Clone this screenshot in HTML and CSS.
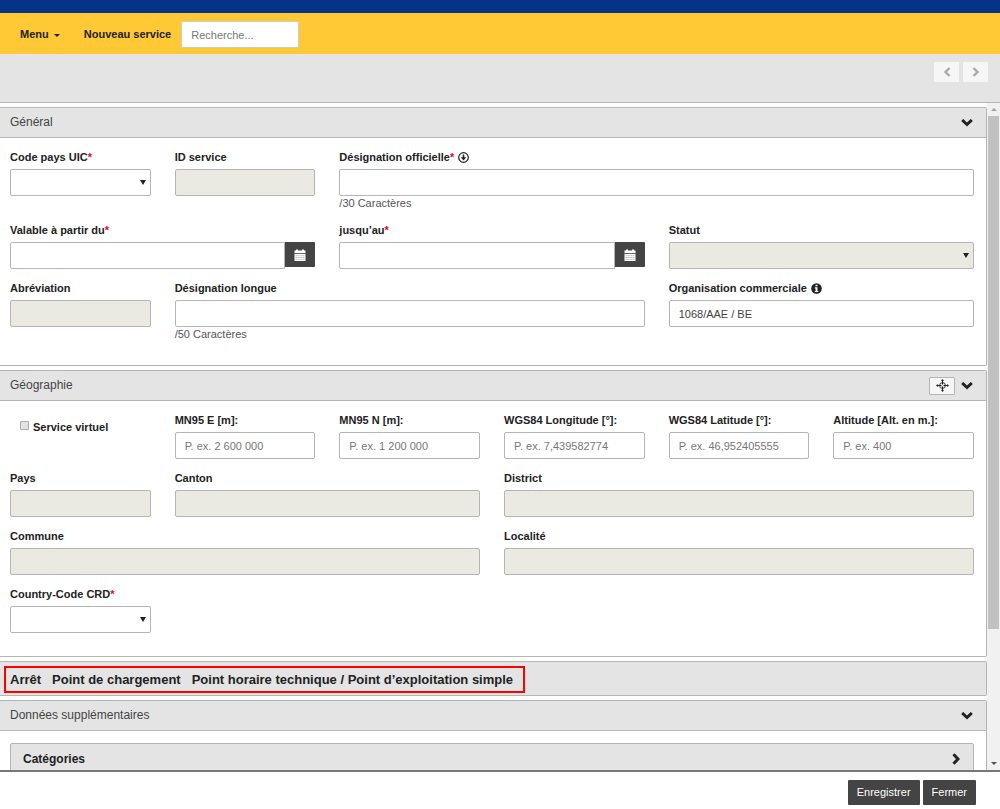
FILE: index.html
```
<!DOCTYPE html>
<html lang="fr">
<head>
    <meta charset="UTF-8">
    <title>Nouveau service</title>
    <meta name="viewport" content="width=device-width, initial-scale=1">
    <link rel="stylesheet" href="styles.css">
</head>
<body>
    <div class="brand-bar"></div>
    <nav class="navbar">
        <button type="button" class="nav-item">Menu <span class="caret"></span></button>
        <a href="#" class="nav-item">Nouveau service</a>
        <input type="search" class="search" placeholder="Recherche..." aria-label="Recherche">
    </nav>

    <div class="toolbar">
        <button type="button" class="btn-nav" aria-label="Précédent" disabled>
            <svg width="8" height="10" viewBox="0 0 8 10"><path d="M6.5 1 2.5 5l4 4"/></svg>
        </button>
        <button type="button" class="btn-nav" aria-label="Suivant" disabled>
            <svg width="8" height="10" viewBox="0 0 8 10"><path d="M1.5 1l4 4-4 4"/></svg>
        </button>
    </div>

    <div class="scroll-area">
        <main class="content">
            <section class="panel">
                <div class="panel-head">
                    <h2>Général</h2>
                    <button type="button" class="toggle" aria-label="Réduire Général">
                        <svg width="12" height="8" viewBox="0 0 12 8"><path d="M1.2 1 6 5.500 10.800 1"/></svg>
                    </button>
                </div>
                <div class="panel-body grid">
                    <div class="field">
                        <label for="uic">Code pays UIC<span class="req">*</span></label>
                        <div class="select"><select id="uic"><option></option></select></div>
                    </div>
                    <div class="field">
                        <label for="service-id">ID service</label>
                        <input type="text" id="service-id" disabled>
                    </div>
                    <div class="field span-4">
                        <label for="name">Désignation officielle<span class="req">*</span>
                            <svg class="label-icon" width="11" height="11" viewBox="0 0 11 11"><circle cx="5.500" cy="5.500" r="4.800" fill="none" stroke="#222" stroke-width="1.200"/><path d="M4.700 2.500h1.600v2.700h2L5.500 8.400 2.700 5.200h2z" fill="#222"/></svg>
                        </label>
                        <input type="text" id="name">
                        <span class="help">/30 Caractères</span>
                    </div>

                    <div class="field span-2">
                        <label for="from">Valable à partir du<span class="req">*</span></label>
                        <div class="date">
                            <input type="text" id="from">
                            <button type="button" aria-label="Choisir la date de début">
                                <svg width="12" height="12" viewBox="0 0 12 12"><path d="M0.500 1.500H2V.5h2v1h4v-1h2v1h1.500V4H.5z" fill="#fff"/><path d="M.5 4.800h11V12H.5z" fill="#fff"/><path d="M1.500 6.700h9M1.500 8.500h9M1.500 10.300h9" stroke="#888" stroke-width=".6" stroke-dasharray="1.300 .6"/></svg>
                            </button>
                        </div>
                    </div>
                    <div class="field span-2">
                        <label for="to">jusqu’au<span class="req">*</span></label>
                        <div class="date">
                            <input type="text" id="to">
                            <button type="button" aria-label="Choisir la date de fin">
                                <svg width="12" height="12" viewBox="0 0 12 12"><path d="M0.500 1.500H2V.5h2v1h4v-1h2v1h1.500V4H.5z" fill="#fff"/><path d="M.5 4.800h11V12H.5z" fill="#fff"/><path d="M1.500 6.700h9M1.500 8.500h9M1.500 10.300h9" stroke="#888" stroke-width=".6" stroke-dasharray="1.300 .6"/></svg>
                            </button>
                        </div>
                    </div>
                    <div class="field span-2">
                        <label for="status">Statut</label>
                        <div class="select"><select id="status" disabled><option></option></select></div>
                    </div>

                    <div class="field">
                        <label for="abbr">Abréviation</label>
                        <input type="text" id="abbr" disabled>
                    </div>
                    <div class="field span-3">
                        <label for="long-name">Désignation longue</label>
                        <input type="text" id="long-name">
                        <span class="help">/50 Caractères</span>
                    </div>
                    <div class="field span-2">
                        <label for="org">Organisation commerciale
                            <svg class="label-icon" width="11" height="11" viewBox="0 0 11 11"><circle cx="5.500" cy="5.500" r="5.300" fill="#222"/><path d="M4.500 1.700h2v1.600h-2zM3.800 4.300h2.700v3.600h.8v1.200H3.800V7.900h.8V5.500h-.8z" fill="#fff"/></svg>
                        </label>
                        <input type="text" id="org" value="1068/AAE / BE">
                    </div>
                </div>
            </section>

            <section class="panel">
                <div class="panel-head">
                    <h2>Géographie</h2>
                    <button type="button" class="btn-locate" aria-label="Localiser">
                        <svg width="13" height="13" viewBox="0 0 13 13"><circle cx="6.500" cy="6.500" r="2.900" fill="none" stroke="#222" stroke-width=".9"/><path d="M6.500 1v4.500M6.500 7.500V12M1 6.500h4.500M7.500 6.500H12" stroke="#222" stroke-width="1.100"/><path d="M6.500 0 8 2H5zM6.500 13 8 11H5zM0 6.500 2 5v3zM13 6.500 11 5v3z" fill="#222"/></svg>
                    </button>
                    <button type="button" class="toggle" aria-label="Réduire Géographie">
                        <svg width="12" height="8" viewBox="0 0 12 8"><path d="M1.2 1 6 5.500 10.800 1"/></svg>
                    </button>
                </div>
                <div class="panel-body grid">
                    <div class="check">
                        <input type="checkbox" id="virtual">
                        <label for="virtual">Service virtuel</label>
                    </div>
                    <div class="field">
                        <label for="mn95e">MN95 E [m]:</label>
                        <input type="text" id="mn95e" placeholder="P. ex. 2 600 000">
                    </div>
                    <div class="field">
                        <label for="mn95n">MN95 N [m]:</label>
                        <input type="text" id="mn95n" placeholder="P. ex. 1 200 000">
                    </div>
                    <div class="field">
                        <label for="lon">WGS84 Longitude [°]:</label>
                        <input type="text" id="lon" placeholder="P. ex. 7,439582774">
                    </div>
                    <div class="field">
                        <label for="lat">WGS84 Latitude [°]:</label>
                        <input type="text" id="lat" placeholder="P. ex. 46,952405555">
                    </div>
                    <div class="field">
                        <label for="alt">Altitude [Alt. en m.]:</label>
                        <input type="text" id="alt" placeholder="P. ex. 400">
                    </div>

                    <div class="field">
                        <label for="country">Pays</label>
                        <input type="text" id="country" disabled>
                    </div>
                    <div class="field span-2">
                        <label for="canton">Canton</label>
                        <input type="text" id="canton" disabled>
                    </div>
                    <div class="field span-3">
                        <label for="district">District</label>
                        <input type="text" id="district" disabled>
                    </div>

                    <div class="field span-3">
                        <label for="commune">Commune</label>
                        <input type="text" id="commune" disabled>
                    </div>
                    <div class="field span-3">
                        <label for="locality">Localité</label>
                        <input type="text" id="locality" disabled>
                    </div>

                    <div class="field">
                        <label for="crd">Country-Code CRD<span class="req">*</span></label>
                        <div class="select"><select id="crd"><option></option></select></div>
                    </div>
                </div>
            </section>

            <section class="panel types">
                <div class="type-list">
                    <span>Arrêt</span>
                    <span>Point de chargement</span>
                    <span>Point horaire technique / Point d’exploitation simple</span>
                </div>
            </section>

            <section class="panel">
                <div class="panel-head">
                    <h2>Données supplémentaires</h2>
                    <button type="button" class="toggle" aria-label="Réduire Données supplémentaires">
                        <svg width="12" height="8" viewBox="0 0 12 8"><path d="M1.2 1 6 5.500 10.800 1"/></svg>
                    </button>
                </div>
                <div class="panel-body">
                    <div class="sub-panel">
                        <h3>Catégories</h3>
                        <button type="button" class="toggle" aria-label="Ouvrir Catégories">
                            <svg width="8" height="12" viewBox="0 0 8 12"><path d="M1.500 1.200 6 6l-4.500 4.800"/></svg>
                        </button>
                    </div>
                </div>
            </section>
        </main>
        <div class="scrollbar" aria-hidden="true">
            <span class="arrow-up"></span>
            <div class="track"><div class="thumb"></div></div>
            <span class="arrow-down"></span>
        </div>
    </div>

    <footer class="footer">
        <button type="submit" class="btn">Enregistrer</button>
        <button type="button" class="btn">Fermer</button>
    </footer>
</body>
</html>
```
FILE: styles.css
```
* {
    box-sizing: border-box;
}

body {
    margin: 0;
    height: 100vh;
    display: flex;
    flex-direction: column;
    background: #fff;
    color: #222;
    font-family: "Liberation Sans", Arial, sans-serif;
    font-size: 11px;
    line-height: 15px;
}

button,
input,
select {
    font: inherit;
    color: inherit;
    margin: 0;
}

button {
    cursor: pointer;
}

svg {
    display: block;
}

/* header */

.brand-bar {
    flex: none;
    height: 13px;
    background: #053388;
}

.navbar {
    flex: none;
    display: flex;
    align-items: center;
    height: 41px;
    padding: 2px 0 0 20px;
    background: #ffc935;
}

.nav-item {
    margin-right: 24px;
    padding: 0;
    border: 0;
    background: none;
    color: #222;
    font-weight: bold;
    text-decoration: none;
}

.nav-item + .nav-item {
    margin-right: 10px;
}

.caret {
    display: inline-block;
    margin-left: 2px;
    vertical-align: middle;
    border: 3px solid transparent;
    border-top-color: #222;
    border-bottom: 0;
}

.search {
    width: 118px;
    height: 27px;
    padding: 0 9px;
    border: 1px solid #ccc;
    border-radius: 2px;
    background: #fff;
}

::placeholder {
    color: #777;
    opacity: 1;
}

.toolbar {
    flex: none;
    display: flex;
    justify-content: flex-end;
    align-items: flex-start;
    gap: 4px;
    height: 49px;
    padding: 8px 12px 0;
    border-bottom: 1px solid #b5b5b5;
    background: #e4e4e4;
}

.btn-nav {
    display: flex;
    align-items: center;
    justify-content: center;
    width: 25px;
    height: 20px;
    padding: 0;
    border: 0;
    border-radius: 1px;
    background: #f6f6f6;
}

.btn-nav path {
    fill: none;
    stroke: #aaa;
    stroke-width: 2.4;
}

/* scrolling content */

.scroll-area {
    flex: 1;
    min-height: 0;
    display: flex;
}

.content {
    flex: 1;
    min-width: 0;
    padding-top: 4px;
    overflow-y: auto;
    scrollbar-width: none;
}

.scrollbar {
    flex: none;
    display: flex;
    flex-direction: column;
    align-items: center;
    width: 13px;
    padding: 5px 1px;
    background: #f1f1f1;
}

.track {
    flex: 1;
    width: 100%;
    margin: 5px 0;
}

.thumb {
    height: 80%;
    background: #c1c1c1;
}

.arrow-up,
.arrow-down {
    border: 3px solid transparent;
}

.arrow-up {
    border-top: 0;
    border-bottom-color: #a3a3a3;
}

.arrow-down {
    border-bottom: 0;
    border-top-color: #505050;
}

/* panels */

.panel {
    margin-bottom: 4px;
    border: 1px solid #b5b5b5;
    border-left: 0;
    border-radius: 0 2px 2px 0;
}

.panel-head {
    display: flex;
    align-items: center;
    gap: 6px;
    height: 30px;
    padding: 0 13px 0 10px;
    border-bottom: 1px solid #b5b5b5;
    background: #e4e4e4;
}

.panel-head h2 {
    flex: 1;
    margin: 0;
    color: #444;
    font-size: 12px;
    font-weight: normal;
}

.toggle {
    padding: 0;
    border: 0;
    background: none;
}

.toggle path {
    fill: none;
    stroke: #222;
    stroke-width: 3;
}

.btn-locate {
    display: flex;
    align-items: center;
    justify-content: center;
    width: 26px;
    height: 18px;
    padding: 0;
    border: 1px solid #b5b5b5;
    border-radius: 1px;
    background: #f6f6f6;
}

.panel-body {
    padding: 12px 12px 23px 10px;
}

.grid {
    display: grid;
    grid-template-columns: repeat(6, 1fr);
    gap: 12px 24px;
}

.span-2 {
    grid-column: span 2;
}

.span-3 {
    grid-column: span 3;
}

.span-4 {
    grid-column: span 4;
}

/* form fields */

.field {
    min-width: 0;
}

.field label {
    display: flex;
    align-items: center;
    margin-bottom: 4px;
    font-weight: bold;
    white-space: nowrap;
}

.label-icon {
    margin-left: 4px;
}

.req {
    color: #f00;
}

.field input,
.field select {
    display: block;
    width: 100%;
    height: 27px;
    padding: 0 9px;
    border: 1px solid #b5b5b5;
    border-radius: 2px;
    background: #fff;
    color: #444;
}

.field input:disabled,
.field select:disabled {
    background: #eaeae2;
    opacity: 1;
}

.field select {
    appearance: none;
}

.select {
    position: relative;
}

.select::after {
    content: "";
    position: absolute;
    top: 11px;
    right: 5px;
    border: 3px solid transparent;
    border-top: 5px solid #222;
    border-bottom: 0;
    pointer-events: none;
}

.help {
    display: block;
    color: #555;
}

.date {
    display: flex;
}

.date input {
    flex: 1;
    min-width: 0;
    border-radius: 2px 0 0 2px;
}

.date button {
    display: flex;
    align-items: center;
    justify-content: center;
    width: 30px;
    height: 25px;
    padding: 0;
    border: 0;
    border-radius: 0 1px 1px 0;
    background: #444;
}

.check {
    display: flex;
    align-items: flex-start;
    gap: 4px;
    padding: 7px 0 0 10px;
    font-weight: bold;
}

.check input {
    appearance: none;
    width: 9px;
    height: 9px;
    margin-top: 1px;
    border: 1px solid #aaa;
    border-radius: 1px;
    background: #e4e4e4;
}

.check input:checked {
    background: #444;
}

/* service types */

.types {
    padding: 4px 0 2px 4px;
    background: #e4e4e4;
}

.type-list {
    display: inline-flex;
    align-items: center;
    gap: 11px;
    height: 27px;
    padding: 0 10px 0 4px;
    border: 2px solid #f00;
    font-size: 13px;
    font-weight: bold;
    vertical-align: top;
}

.sub-panel {
    display: flex;
    align-items: center;
    justify-content: space-between;
    height: 32px;
    padding: 0 13px 0 12px;
    border: 1px solid #b5b5b5;
    border-radius: 2px;
    background: #e4e4e4;
}

.sub-panel h3 {
    margin: 0;
    font-size: 12px;
}

/* footer */

.footer {
    flex: none;
    display: flex;
    justify-content: flex-end;
    gap: 3px;
    padding: 8px 24px 4px;
    border-top: 2px solid #777;
}

.btn {
    height: 25px;
    padding: 0 9px;
    border: 0;
    border-radius: 1px;
    background: #444;
    color: #fff;
}
```
